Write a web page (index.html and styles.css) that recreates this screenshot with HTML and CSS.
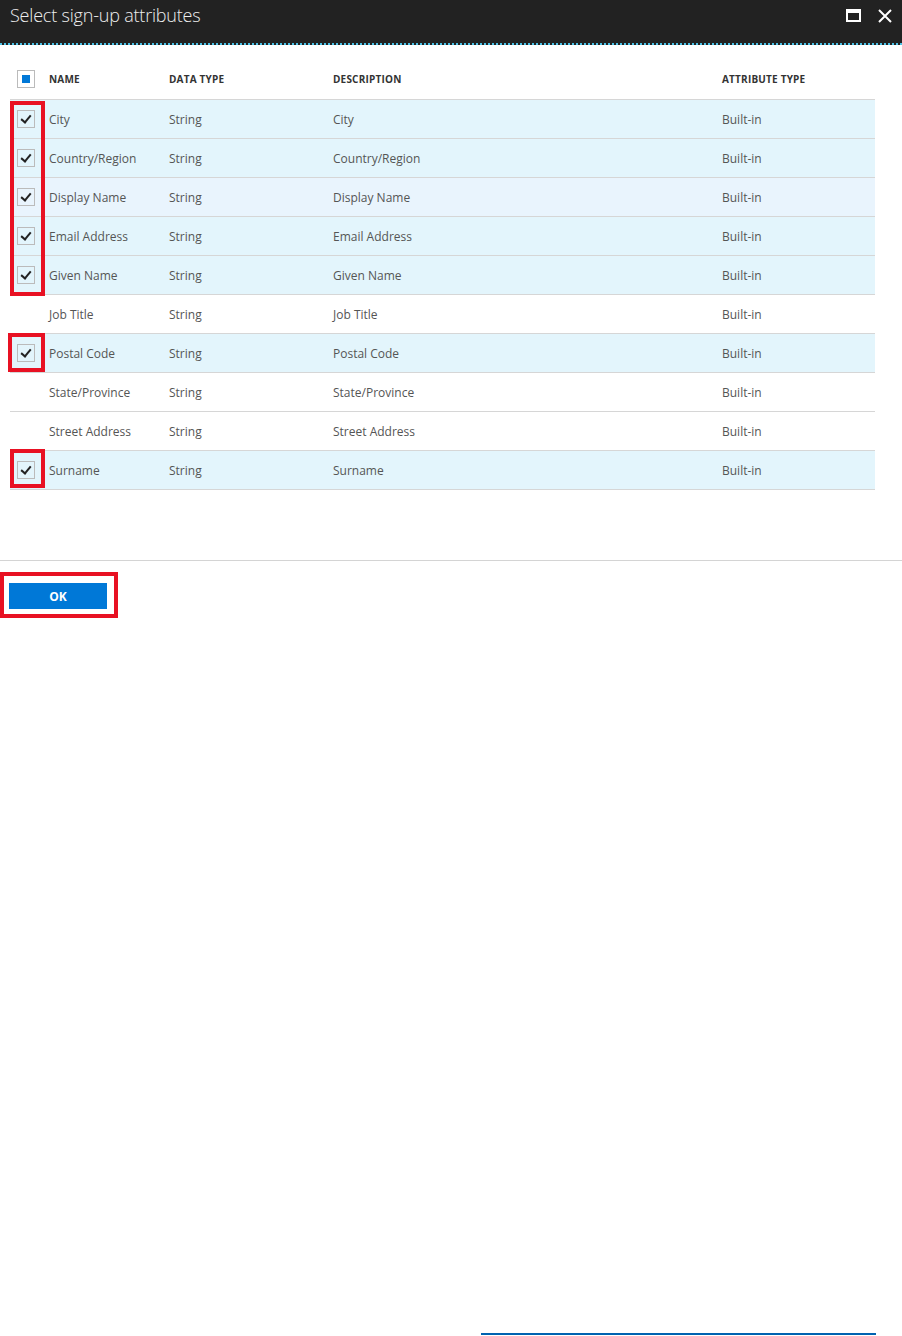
FILE: index.html
```html
<!DOCTYPE html>
<html lang="en">
<head>
    <meta charset="UTF-8" />
    <meta name="viewport" content="width=device-width, initial-scale=1.0" />
    <title>Select sign-up attributes</title>
    <link rel="stylesheet" href="styles.css">
</head>
<body>
    <!-- Blade header -->
    <div class="blade-header">
        <h1>Select sign-up attributes</h1>
        <div class="blade-actions">
            <span class="icon-max"></span>
            <svg class="icon-close" width="14" height="14" viewBox="0 0 14 14">
                <path d="M1 1 L13 13 M13 1 L1 13" stroke="#fff" stroke-width="2" fill="none" />
            </svg>
        </div>
    </div>

    <div class="blade-body">
        <div class="grid">
            <div class="row head">
                <div class="cell check"><span class="box partial"></span></div>
                <div class="cell">NAME</div>
                <div class="cell">DATA TYPE</div>
                <div class="cell">DESCRIPTION</div>
                <div class="cell">ATTRIBUTE TYPE</div>
            </div>

            <div class="row selected">
                <div class="cell check"><span class="box checked"></span></div>
                <div class="cell">City</div>
                <div class="cell">String</div>
                <div class="cell">City</div>
                <div class="cell">Built-in</div>
            </div>
            <div class="row selected">
                <div class="cell check"><span class="box checked"></span></div>
                <div class="cell">Country/Region</div>
                <div class="cell">String</div>
                <div class="cell">Country/Region</div>
                <div class="cell">Built-in</div>
            </div>
            <div class="row selected hover">
                <div class="cell check"><span class="box checked"></span></div>
                <div class="cell">Display Name</div>
                <div class="cell">String</div>
                <div class="cell">Display Name</div>
                <div class="cell">Built-in</div>
            </div>
            <div class="row selected">
                <div class="cell check"><span class="box checked"></span></div>
                <div class="cell">Email Address</div>
                <div class="cell">String</div>
                <div class="cell">Email Address</div>
                <div class="cell">Built-in</div>
            </div>
            <div class="row selected">
                <div class="cell check"><span class="box checked"></span></div>
                <div class="cell">Given Name</div>
                <div class="cell">String</div>
                <div class="cell">Given Name</div>
                <div class="cell">Built-in</div>
            </div>
            <div class="row">
                <div class="cell check"></div>
                <div class="cell">Job Title</div>
                <div class="cell">String</div>
                <div class="cell">Job Title</div>
                <div class="cell">Built-in</div>
            </div>
            <div class="row selected">
                <div class="cell check"><span class="box checked"></span></div>
                <div class="cell">Postal Code</div>
                <div class="cell">String</div>
                <div class="cell">Postal Code</div>
                <div class="cell">Built-in</div>
            </div>
            <div class="row">
                <div class="cell check"></div>
                <div class="cell">State/Province</div>
                <div class="cell">String</div>
                <div class="cell">State/Province</div>
                <div class="cell">Built-in</div>
            </div>
            <div class="row">
                <div class="cell check"></div>
                <div class="cell">Street Address</div>
                <div class="cell">String</div>
                <div class="cell">Street Address</div>
                <div class="cell">Built-in</div>
            </div>
            <div class="row selected">
                <div class="cell check"><span class="box checked"></span></div>
                <div class="cell">Surname</div>
                <div class="cell">String</div>
                <div class="cell">Surname</div>
                <div class="cell">Built-in</div>
            </div>

            <!-- red callouts drawn over the checkboxes -->
            <div class="callout callout-top"></div>
            <div class="callout callout-postal"></div>
            <div class="callout callout-surname"></div>
        </div>
    </div>

    <div class="blade-footer">
        <div class="ok-wrap">
            <button class="btn-ok">OK</button>
        </div>
    </div>

    <div class="bottom-bar"></div>
</body>
</html>
```

FILE: styles.css
```css
body {
    margin: 0;
    font-family: "Open Sans", "Noto Sans", Arial, sans-serif;
    color: #444;
    background: #fff;
    width: 902px;
}

.blade-header {
    height: 45px;
    background: #222;
    border-bottom: 2px dotted #4cc3e8;
    display: flex;
    align-items: flex-start;
    justify-content: space-between;
    box-sizing: border-box;
}

.blade-header h1 {
    margin: 0;
    padding: 3px 0 0 10px;
    font-size: 18px;
    font-weight: 300;
    color: #eee;
    letter-spacing: -0.2px;
}

.blade-actions {
    display: flex;
    align-items: center;
    gap: 17px;
    padding: 8px 10px 0 0;
}

.icon-max {
    display: block;
    width: 15px;
    height: 13px;
    box-sizing: border-box;
    border: 2px solid #fff;
    border-top-width: 4px;
}

.icon-close {
    display: block;
    margin-top: 1px;
}

.blade-body {
    padding: 14px 27px 70px 10px;
    border-bottom: 1px solid #d4d4d4;
}

.grid {
    position: relative;
    width: 865px;
}

.row {
    display: grid;
    grid-template-columns: 39px 120px 164px 389px 153px;
    height: 39px;
    align-items: center;
    border-bottom: 1px solid #d6d6d6;
    box-sizing: border-box;
    font-size: 12px;
    color: #555;
}

.row.head {
    height: 41px;
    font-size: 10px;
    font-weight: 700;
    color: #333;
    letter-spacing: 0.2px;
}

.row.selected {
    background: #e3f5fc;
}

.row.hover {
    background: #e9f4fd;
}

.check {
    display: flex;
    justify-content: flex-start;
    padding-left: 7px;
}

.box {
    display: block;
    width: 18px;
    height: 18px;
    box-sizing: border-box;
    border: 1px solid #bbb;
    background: #fff;
    position: relative;
}

.row.selected .box {
    background: transparent;
}

.box.partial::after {
    content: "";
    position: absolute;
    left: 4px;
    top: 4px;
    width: 8px;
    height: 8px;
    background: #0078d7;
}

.box.checked::after {
    content: "";
    position: absolute;
    left: 5px;
    top: 2px;
    width: 4px;
    height: 8px;
    border-right: 2px solid #222;
    border-bottom: 2px solid #222;
    transform: rotate(40deg);
}

.callout {
    position: absolute;
    border: 4px solid #e81123;
    box-sizing: border-box;
}

.callout-top {
    left: 0;
    top: 42px;
    width: 35px;
    height: 195px;
}

.callout-postal {
    left: -2px;
    top: 274px;
    width: 37px;
    height: 39px;
}

.callout-surname {
    left: 0;
    top: 390px;
    width: 35px;
    height: 39px;
}

.blade-footer {
    padding: 11px 0 0 0;
}

.ok-wrap {
    display: inline-block;
    border: 4px solid #e81123;
    padding: 7px 7px 5px 5px;
}

.btn-ok {
    display: block;
    width: 98px;
    height: 26px;
    border: 0;
    background: #0078d7;
    color: #fff;
    font-family: "Open Sans", Arial, sans-serif;
    font-size: 12px;
    font-weight: 700;
    padding: 0;
}

.bottom-bar {
    margin: 715px 0 0 481px;
    width: 395px;
    height: 2px;
    background: #0063b1;
}
```
